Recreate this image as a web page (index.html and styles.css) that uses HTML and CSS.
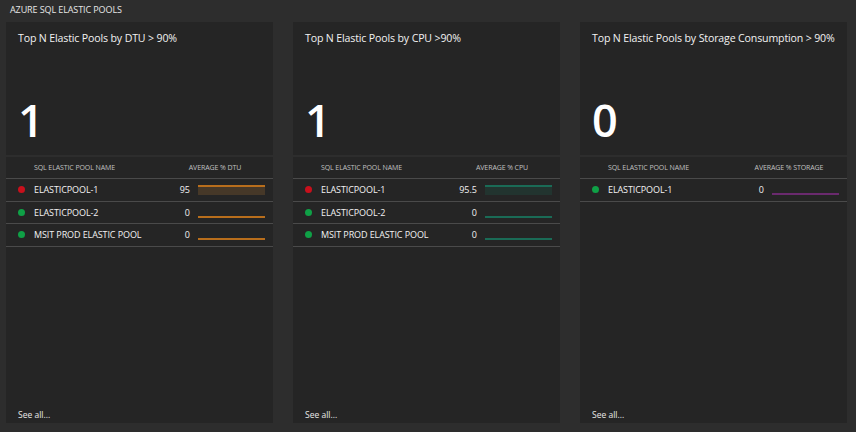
FILE: index.html
```html
<!DOCTYPE html>
<html>
<head>
<meta charset="utf-8">
<link rel="stylesheet" href="styles.css">
</head>
<body>
<div class="page">
  <div class="header">AZURE SQL ELASTIC POOLS</div>
  <div class="cards">
    <div class="card">
      <div class="card-top">
        <div class="title">Top N Elastic Pools by DTU &gt; 90%</div>
        <div class="big">1</div>
      </div>
      <div class="card-table">
        <div class="thead"><span class="th-name">SQL ELASTIC POOL NAME</span><span class="th-val">AVERAGE % DTU</span></div>
        <div class="row"><span class="dot red"></span><span class="name">ELASTICPOOL-1</span><span class="val">95</span><span class="bar dtu"><span class="fill" style="height:10px"></span></span></div>
        <div class="row"><span class="dot green"></span><span class="name">ELASTICPOOL-2</span><span class="val">0</span><span class="bar dtu"><span class="fill" style="height:2px"></span></span></div>
        <div class="row"><span class="dot green"></span><span class="name">MSIT PROD ELASTIC POOL</span><span class="val">0</span><span class="bar dtu"><span class="fill" style="height:2px"></span></span></div>
        <div class="spacer"></div>
        <div class="seeall">See all...</div>
      </div>
    </div>
    <div class="card">
      <div class="card-top">
        <div class="title">Top N Elastic Pools by CPU &gt;90%</div>
        <div class="big">1</div>
      </div>
      <div class="card-table">
        <div class="thead"><span class="th-name">SQL ELASTIC POOL NAME</span><span class="th-val">AVERAGE % CPU</span></div>
        <div class="row"><span class="dot red"></span><span class="name">ELASTICPOOL-1</span><span class="val">95.5</span><span class="bar cpu"><span class="fill" style="height:10px"></span></span></div>
        <div class="row"><span class="dot green"></span><span class="name">ELASTICPOOL-2</span><span class="val">0</span><span class="bar cpu"><span class="fill" style="height:2px"></span></span></div>
        <div class="row"><span class="dot green"></span><span class="name">MSIT PROD ELASTIC POOL</span><span class="val">0</span><span class="bar cpu"><span class="fill" style="height:2px"></span></span></div>
        <div class="spacer"></div>
        <div class="seeall">See all...</div>
      </div>
    </div>
    <div class="card">
      <div class="card-top">
        <div class="title">Top N Elastic Pools by Storage Consumption &gt; 90%</div>
        <div class="big">0</div>
      </div>
      <div class="card-table">
        <div class="thead"><span class="th-name">SQL ELASTIC POOL NAME</span><span class="th-val">AVERAGE % STORAGE</span></div>
        <div class="row"><span class="dot green"></span><span class="name">ELASTICPOOL-1</span><span class="val">0</span><span class="bar storage"><span class="fill" style="height:2px"></span></span></div>
        <div class="spacer"></div>
        <div class="seeall">See all...</div>
      </div>
    </div>
  </div>
</div>
</body>
</html>
```
FILE: styles.css
```css
html, body {
  margin: 0;
  padding: 0;
  background: #2d2d2d;
}
.page {
  width: 856px;
  height: 432px;
  font-family: "Open Sans", "Noto Sans", "Liberation Sans", sans-serif;
  color: #f0f0f0;
  overflow: hidden;
}
.header {
  height: 22px;
  box-sizing: border-box;
  padding: 3px 0 0 10px;
  font-size: 9px;
  line-height: 14px;
  color: #e6e6e6;
  letter-spacing: -0.1px;
}
.cards {
  display: flex;
  gap: 20px;
  padding-left: 6px;
}
.card {
  width: 267px;
  height: 401px;
  display: flex;
  flex-direction: column;
  gap: 2px;
}
.card-top {
  background: #252525;
  height: 133px;
  box-sizing: border-box;
  padding: 9px 12px 0 12px;
}
.title {
  font-size: 10.6px;
  color: #f2f2f2;
  letter-spacing: -0.15px;
  white-space: nowrap;
}
.big {
  margin-top: 49px;
  font-size: 45px;
  line-height: 52px;
  font-weight: 600;
  color: #ffffff;
  font-family: "Open Sans", "Noto Sans", sans-serif;
}
.card-table {
  background: #252525;
  flex: 1;
  display: flex;
  flex-direction: column;
}
.thead {
  height: 21px;
  display: flex;
  align-items: center;
  border-bottom: 1px solid #4a4a4a;
  font-size: 7px;
  color: #c0c0c0;
  letter-spacing: -0.1px;
}
.th-name {
  flex: 1;
  padding-left: 28px;
}
.th-val {
  width: 100px;
  margin-right: 8px;
  text-align: center;
}
.row {
  height: 21.5px;
  display: flex;
  align-items: center;
  border-bottom: 1px solid #4a4a4a;
  padding-left: 12px;
  font-size: 9px;
  color: #f2f2f2;
}
.dot {
  width: 7px;
  height: 7px;
  border-radius: 50%;
  margin-right: 9px;
  flex: none;
}
.dot.red { background: #c8101c; }
.dot.green { background: #0fa046; }
.name {
  flex: 1;
  letter-spacing: -0.1px;
}
.val {
  margin-right: 8px;
  text-align: right;
}
.bar {
  width: 67px;
  height: 10px;
  margin-right: 8px;
  margin-top: 1px;
  display: flex;
  align-items: flex-end;
  flex: none;
}
.fill {
  display: block;
  width: 100%;
  box-sizing: border-box;
  border-top: 2px solid;
}
.bar.dtu .fill { border-color: #b86e1c; background: #463828; }
.bar.cpu .fill { border-color: #1a6b56; background: #22342f; }
.bar.storage .fill { border-color: #6a2a6e; background: #3a2a3c; }
.spacer { flex: 1; }
.seeall {
  padding: 0 0 3px 12px;
  font-size: 8.5px;
  color: #e8e8e8;
}
```
